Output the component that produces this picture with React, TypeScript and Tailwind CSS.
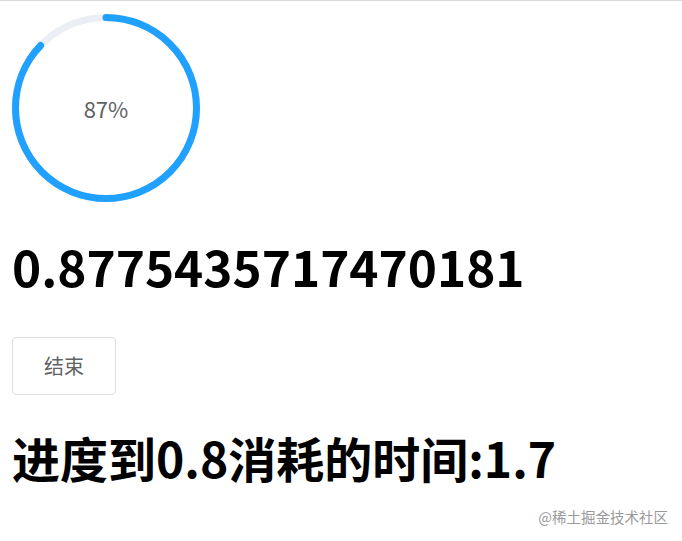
import React from 'react';

const FONT = "font-['Noto_Sans_CJK_SC','Noto_Sans',sans-serif]";

function ProgressCircle({ percent }: { percent: number }) {
  const size = 188;
  const stroke = 7;
  const r = (size - stroke) / 2;
  const c = 2 * Math.PI * r;
  return (
    <div className="relative w-[188px] h-[188px]">
      <svg width={size} height={size} viewBox={`0 0 ${size} ${size}`}>
        <circle cx={size / 2} cy={size / 2} r={r} fill="none" stroke="#ebeef5" strokeWidth={stroke} />
        <circle
          cx={size / 2}
          cy={size / 2}
          r={r}
          fill="none"
          stroke="#20a0ff"
          strokeWidth={stroke}
          strokeLinecap="round"
          strokeDasharray={`${(c * percent) / 100} ${c}`}
          transform={`rotate(-90 ${size / 2} ${size / 2})`}
        />
      </svg>
      <div className="absolute inset-0 flex items-center justify-center text-[22px] text-[#606266]">{percent}%</div>
    </div>
  );
}

export default function App() {
  return (
    <div className={`${FONT} min-h-[541px] bg-white border-t border-[#dcdcdc] relative`}>
      <div className="pl-[12px] pt-[13px]">
        <ProgressCircle percent={87} />
        <h1 className="mt-[39px] text-[49.5px] font-bold leading-none text-black">0.8775435717470181</h1>
        <button className="mt-[46px] w-[104px] h-[58px] border border-[#dcdfe6] rounded-[4px] text-[20px] text-[#606266] bg-white">
          结束
        </button>
        <h1 className="mt-[38px] text-[48px] font-bold leading-none text-black">进度到0.8消耗的时间:1.7</h1>
      </div>
      <div className="absolute right-[14px] bottom-[13px] text-[14.5px] text-[#9a9a9a]">@稀土掘金技术社区</div>
    </div>
  );
}
